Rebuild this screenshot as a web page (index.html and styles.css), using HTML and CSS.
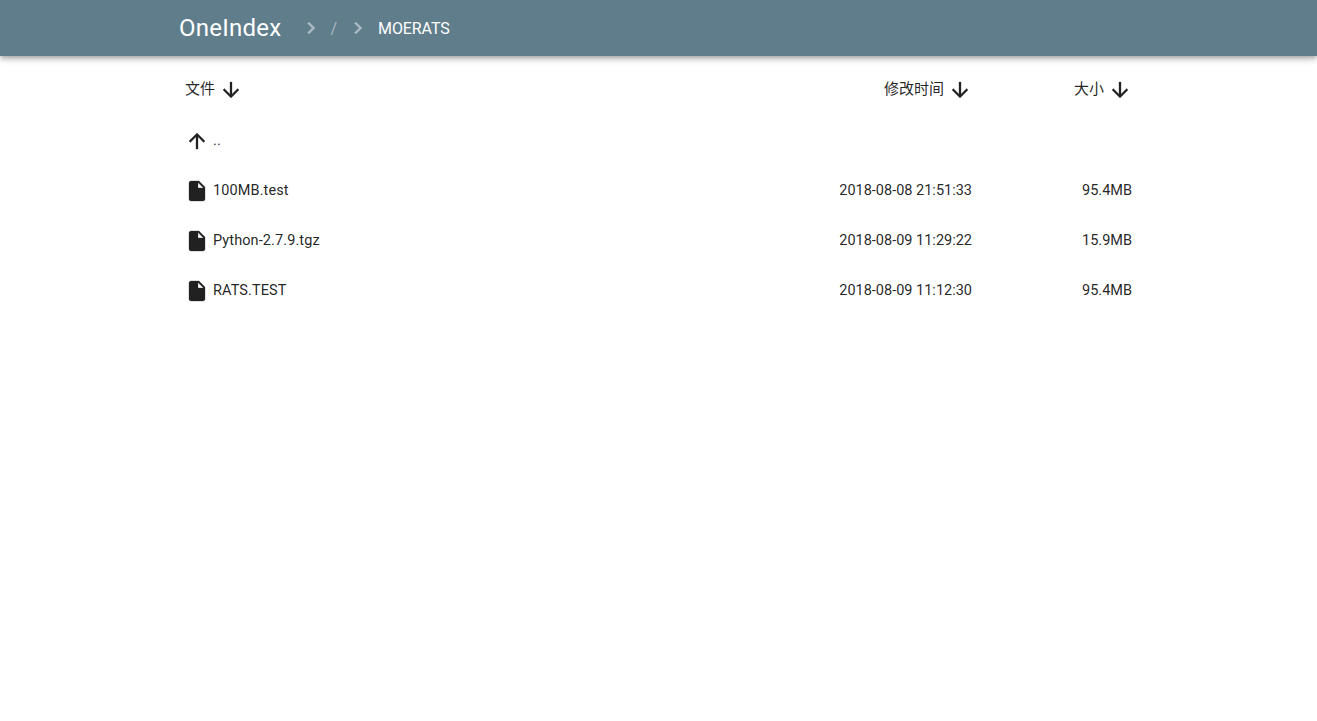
FILE: index.html
```html
<!DOCTYPE html>
<html lang="en">
<head>
    <meta charset="UTF-8">
    <meta name="viewport" content="width=device-width, initial-scale=1.0">
    <title>OneIndex</title>
    <link rel="stylesheet" href="styles.css">
</head>
<body>
    <header class="appbar">
        <div class="toolbar">
            <a class="brand" href="#">OneIndex</a>
            <svg class="chevron" viewBox="0 0 24 24"><path d="M10 6L8.59 7.41 13.17 12l-4.58 4.59L10 18l6-6z"/></svg>
            <a class="crumb-root" href="#">/</a>
            <svg class="chevron" viewBox="0 0 24 24"><path d="M10 6L8.59 7.41 13.17 12l-4.58 4.59L10 18l6-6z"/></svg>
            <a class="crumb" href="#">MOERATS</a>
        </div>
    </header>

    <main class="container">
        <div class="row head">
            <div class="col-name"><span class="title">文件</span><svg class="icon icon-sort" viewBox="0 0 24 24"><path d="M20 12l-1.41-1.41L13 16.17V4h-2v12.17l-5.58-5.59L4 12l8 8 8-8z"/></svg></div>
            <div class="col-date"><span class="title">修改时间</span><svg class="icon icon-sort" viewBox="0 0 24 24"><path d="M20 12l-1.41-1.41L13 16.17V4h-2v12.17l-5.58-5.59L4 12l8 8 8-8z"/></svg></div>
            <div class="col-size"><span class="title">大小</span><svg class="icon icon-sort" viewBox="0 0 24 24"><path d="M20 12l-1.41-1.41L13 16.17V4h-2v12.17l-5.58-5.59L4 12l8 8 8-8z"/></svg></div>
        </div>

        <a class="row item" href="#">
            <div class="col-name"><svg class="icon" viewBox="0 0 24 24"><path d="M4 12l1.41 1.41L11 7.83V20h2V7.83l5.58 5.59L20 12l-8-8-8 8z"/></svg><span class="label">..</span></div>
        </a>
        <a class="row item" href="#">
            <div class="col-name"><svg class="icon" viewBox="0 0 24 24"><path d="M6 2c-1.1 0-1.99.9-1.99 2L4 20c0 1.1.89 2 1.99 2H18c1.1 0 2-.9 2-2V8l-6-6H6zm7 7V3.5L18.5 9H13z"/></svg><span class="label">100MB.test</span></div>
            <div class="col-date"><span class="value">2018-08-08 21:51:33</span></div>
            <div class="col-size"><span class="value">95.4MB</span></div>
        </a>
        <a class="row item" href="#">
            <div class="col-name"><svg class="icon" viewBox="0 0 24 24"><path d="M6 2c-1.1 0-1.99.9-1.99 2L4 20c0 1.1.89 2 1.99 2H18c1.1 0 2-.9 2-2V8l-6-6H6zm7 7V3.5L18.5 9H13z"/></svg><span class="label">Python-2.7.9.tgz</span></div>
            <div class="col-date"><span class="value">2018-08-09 11:29:22</span></div>
            <div class="col-size"><span class="value">15.9MB</span></div>
        </a>
        <a class="row item" href="#">
            <div class="col-name"><svg class="icon" viewBox="0 0 24 24"><path d="M6 2c-1.1 0-1.99.9-1.99 2L4 20c0 1.1.89 2 1.99 2H18c1.1 0 2-.9 2-2V8l-6-6H6zm7 7V3.5L18.5 9H13z"/></svg><span class="label">RATS.TEST</span></div>
            <div class="col-date"><span class="value">2018-08-09 11:12:30</span></div>
            <div class="col-size"><span class="value">95.4MB</span></div>
        </a>
    </main>
</body>
</html>
```

FILE: styles.css
```css
* {
    box-sizing: border-box;
}
body {
    margin: 0;
    font-family: Roboto, "Noto Sans CJK SC", sans-serif;
    font-size: 14.5px;
    color: rgba(0, 0, 0, 0.87);
    background-color: #fff;
}
a {
    color: inherit;
    text-decoration: none;
}
.appbar {
    height: 56px;
    background-color: #607d8b;
    color: #fff;
    box-shadow: 0 2px 4px -1px rgba(0, 0, 0, 0.2), 0 4px 5px 0 rgba(0, 0, 0, 0.14), 0 1px 10px 0 rgba(0, 0, 0, 0.12);
}
.toolbar {
    display: flex;
    align-items: center;
    width: 975px;
    height: 56px;
    margin: 0 auto;
    padding-left: 8px;
}
.brand {
    font-size: 24px;
    letter-spacing: 0.25px;
    margin-right: 18px;
}
.chevron {
    width: 24px;
    height: 24px;
    fill: #a9b9c1;
    stroke: #a9b9c1;
    stroke-width: 0.5;
}
.crumb-root {
    font-size: 16px;
    color: #a9b9c1;
    margin: 0 9px 0 7px;
}
.crumb {
    font-size: 16px;
    letter-spacing: -0.1px;
    margin-left: 8px;
}
.container {
    width: 975px;
    margin: 0 auto;
    padding: 9px 14px 0;
}
.row {
    display: flex;
    align-items: center;
    height: 50px;
}
.head {
    margin-bottom: 1px;
}
.col-name {
    flex: 1;
    display: flex;
    align-items: center;
}
.col-date {
    width: 300px;
}
.col-size {
    width: 160px;
}
.col-date, .col-size {
    display: flex;
    align-items: center;
    justify-content: flex-end;
}
.icon {
    width: 24px;
    height: 24px;
    fill: #212121;
    stroke: #212121;
    stroke-width: 0.3;
    flex-shrink: 0;
}
.icon-sort {
    margin-left: 4px;
}
.title {
    font-size: 15px;
    padding-bottom: 5px;
}
.label {
    margin-left: 4px;
    letter-spacing: 0.1px;
    padding-bottom: 2px;
}
.value {
    padding-bottom: 2px;
}
```
